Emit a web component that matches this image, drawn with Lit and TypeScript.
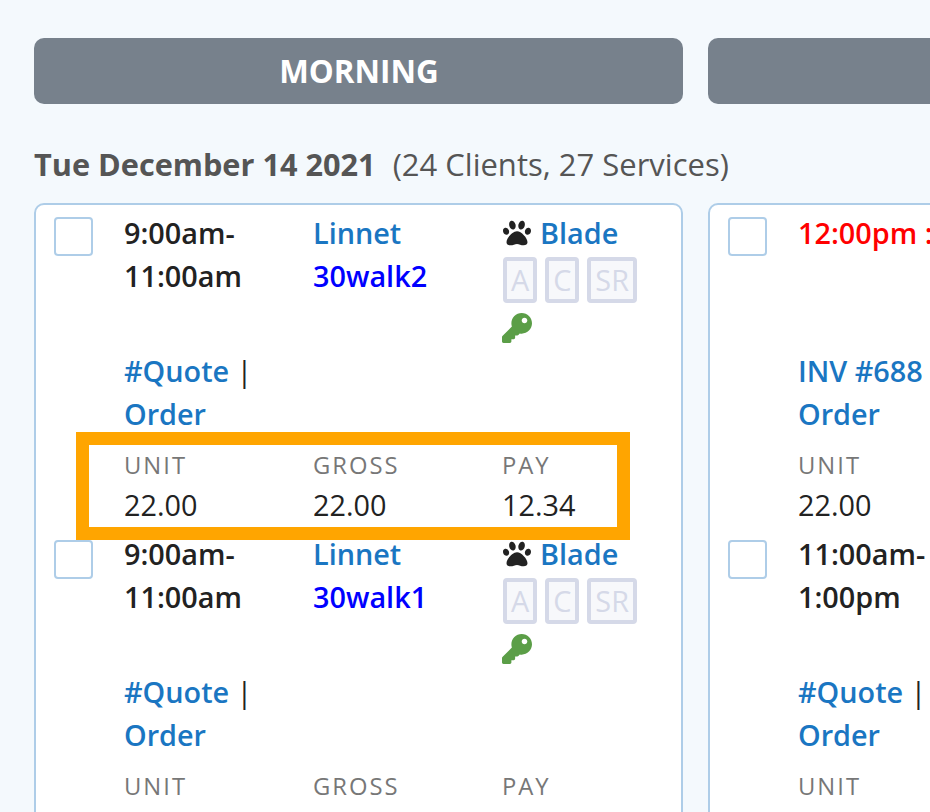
import { LitElement, html, css, svg } from "lit";
import { customElement } from "lit/decorators.js";

const paw = svg`<path d="M256 224c-79.41 0-192 122.76-192 200.25 0 34.9 26.81 55.75 71.74 55.75 48.84 0 81.09-25.08 120.26-25.08 39.51 0 71.85 25.08 120.26 25.08 44.93 0 71.74-20.85 71.74-55.75C448 346.76 335.41 224 256 224zm-147.28-12.61c-10.4-34.65-42.44-57.09-71.56-50.13-29.12 6.96-44.29 40.69-33.89 75.34 10.4 34.65 42.44 57.09 71.56 50.13 29.12-6.96 44.29-40.69 33.89-75.34zm84.72-20.78c30.94-8.14 46.42-49.94 34.58-93.36s-46.52-72.01-77.46-63.87-46.42 49.94-34.58 93.36c11.84 43.42 46.52 72.01 77.46 63.87zm281.39-29.34c-29.12-6.96-61.15 15.48-71.56 50.13-10.4 34.65 4.77 68.38 33.89 75.34 29.12 6.96 61.15-15.48 71.56-50.13 10.4-34.65-4.77-68.38-33.89-75.34zm-156.27 29.34c30.94 8.14 65.62-20.45 77.46-63.87 11.84-43.42-3.64-85.21-34.58-93.36s-65.62 20.45-77.46 63.87c-11.84 43.42 3.64 85.22 34.58 93.36z"/>`;
const key = svg`<path d="M512 176.001C512 273.203 433.202 352 336 352c-11.22 0-22.19-1.062-32.827-3.069l-24.012 27.014A23.999 23.999 0 0 1 261.223 384H224v40c0 13.255-10.745 24-24 24h-40v40c0 13.255-10.745 24-24 24H24c-13.255 0-24-10.745-24-24v-78.059c0-6.365 2.529-12.47 7.029-16.971l161.802-161.802C163.108 213.814 160 195.271 160 176 160 78.798 238.797.001 335.999 0 433.488-.001 512 78.511 512 176.001zM336 128c0 26.51 21.49 48 48 48s48-21.49 48-48-21.49-48-48-48-48 21.49-48 48z"/>`;

interface Row { time: string; red?: boolean; service: string; quote: string; hl?: boolean; }
const columns: { title: string; date: string; sub: string; rows: Row[] }[] = [
  {
    title: "MORNING", date: "Tue December 14 2021", sub: "(24 Clients, 27 Services)",
    rows: [
      { time: "9:00am-", service: "30walk2", quote: "#Quote", hl: true },
      { time: "9:00am-", service: "30walk1", quote: "#Quote" },
    ],
  },
  {
    title: "AFTERNOON", date: "", sub: "",
    rows: [
      { time: "12:00pm :", red: true, service: "30walk2", quote: "INV #688" },
      { time: "11:00am-", service: "30walk1", quote: "#Quote" },
    ],
  },
];

@customElement("app-root")
export class AppRoot extends LitElement {
  static styles = css`
    :host { display: block; height: 812px; overflow: hidden; background: #f4f9fd; font-family: "Open Sans", sans-serif; font-size: 28.8px; line-height: 43px; color: #222; }
    .page { display: flex; gap: 25px; padding: 38px 0 0 34px; width: max-content; }
    .col { width: 649px; }
    .head { height: 66px; box-sizing: border-box; padding: 0 0 2px 1px; background: #77818c; border-radius: 10px; color: #fff; font-size: 31.4px; font-weight: 700; display: flex; align-items: center; justify-content: center; }
    .date { height: 99px; display: flex; align-items: center; gap: 17px; color: #555; box-sizing: border-box; padding-top: 22px; font-size: 31px; white-space: nowrap; }
    .date b { font-weight: 700; font-size: 30.7px; }
    .card { border: 2px solid #aecde8; border-radius: 10px; background: #fff; padding-top: 6px; min-height: 700px; }
    .row { display: flex; align-items: flex-start; padding-left: 18px; height: 321px; }
    .check { flex: none; width: 39px; height: 39px; box-sizing: border-box; border: 2px solid #aecde8; border-radius: 4px; background: #fff; margin: 6px 31px 0 0; }
    .row + .row .check { margin-top: 7.5px; }
    .grid { display: grid; grid-template-columns: 189px 189px 160px; grid-template-rows: 138px 86px auto; }
    .time { font-weight: 600; white-space: nowrap; }
    .red { color: #f00; }
    .link { color: #1a76c2; font-weight: 600; }
    .svc { color: #00f; font-weight: 600; }
    .paw { width: 28px; height: 28px; fill: #222; vertical-align: -3px; margin: 0 9px 0 1px; }
    .badges { display: flex; gap: 8px; height: 46px; margin: 3px 0 0 1px; }
    .badge { box-sizing: border-box; height: 46px; padding: 0 4px; border: 4px solid #d5d9e8; border-radius: 4px; background: #f7f8fb; color: #d5d9e8; display: flex; align-items: center; line-height: 1; }
    .key { display: block; width: 30px; height: 30px; fill: #5b9e47; margin: 10px 0 0 0; }
    .stats { grid-column: 1 / 4; display: grid; grid-template-columns: 189px 189px 160px; position: relative; }
    .label { font-size: 23.8px; letter-spacing: 2px; color: #777; line-height: 36px; margin-top: 11.5px; }
    .val { line-height: 43px; }
    .hl { position: absolute; left: -48px; top: -3px; width: 554px; height: 108px; box-sizing: border-box; border: 13px solid #ffa500; pointer-events: none; }
  `;

  private renderRow(r: Row) {
    const lines = r.time === "12:00pm :" ? html`<span class="red">${r.time}</span>`
      : r.time === "11:00am-" ? html`11:00am-<br>1:00pm`
      : html`9:00am-<br>11:00am`;
    return html`<div class="row">
      <div class="check"></div>
      <div class="grid">
        <div class="time">${lines}</div>
        <div><div class="link">Linnet</div><div class="svc">${r.service}</div></div>
        <div>
          <div class="link"><svg class="paw" viewBox="0 0 512 512">${paw}</svg>Blade</div>
          <div class="badges"><span class="badge">A</span><span class="badge">C</span><span class="badge">SR</span></div>
          <svg class="key" viewBox="0 0 512 512">${key}</svg>
        </div>
        <div><span class="link">${r.quote}</span> |<br><span class="link">Order</span></div>
        <div></div><div></div>
        <div class="stats">
          ${["UNIT", "GROSS", "PAY"].map((l) => html`<div class="label">${l}</div>`)}
          ${["22.00", "22.00", "12.34"].map((v) => html`<div class="val">${v}</div>`)}
          ${r.hl ? html`<div class="hl"></div>` : ""}
        </div>
      </div>
    </div>`;
  }

  render() {
    return html`<div class="page">
      ${columns.map((c) => html`<div class="col">
        <div class="head">${c.title}</div>
        <div class="date"><b>${c.date}</b><span>${c.sub}</span></div>
        <div class="card">${c.rows.map((r) => this.renderRow(r))}</div>
      </div>`)}
    </div>`;
  }
}
